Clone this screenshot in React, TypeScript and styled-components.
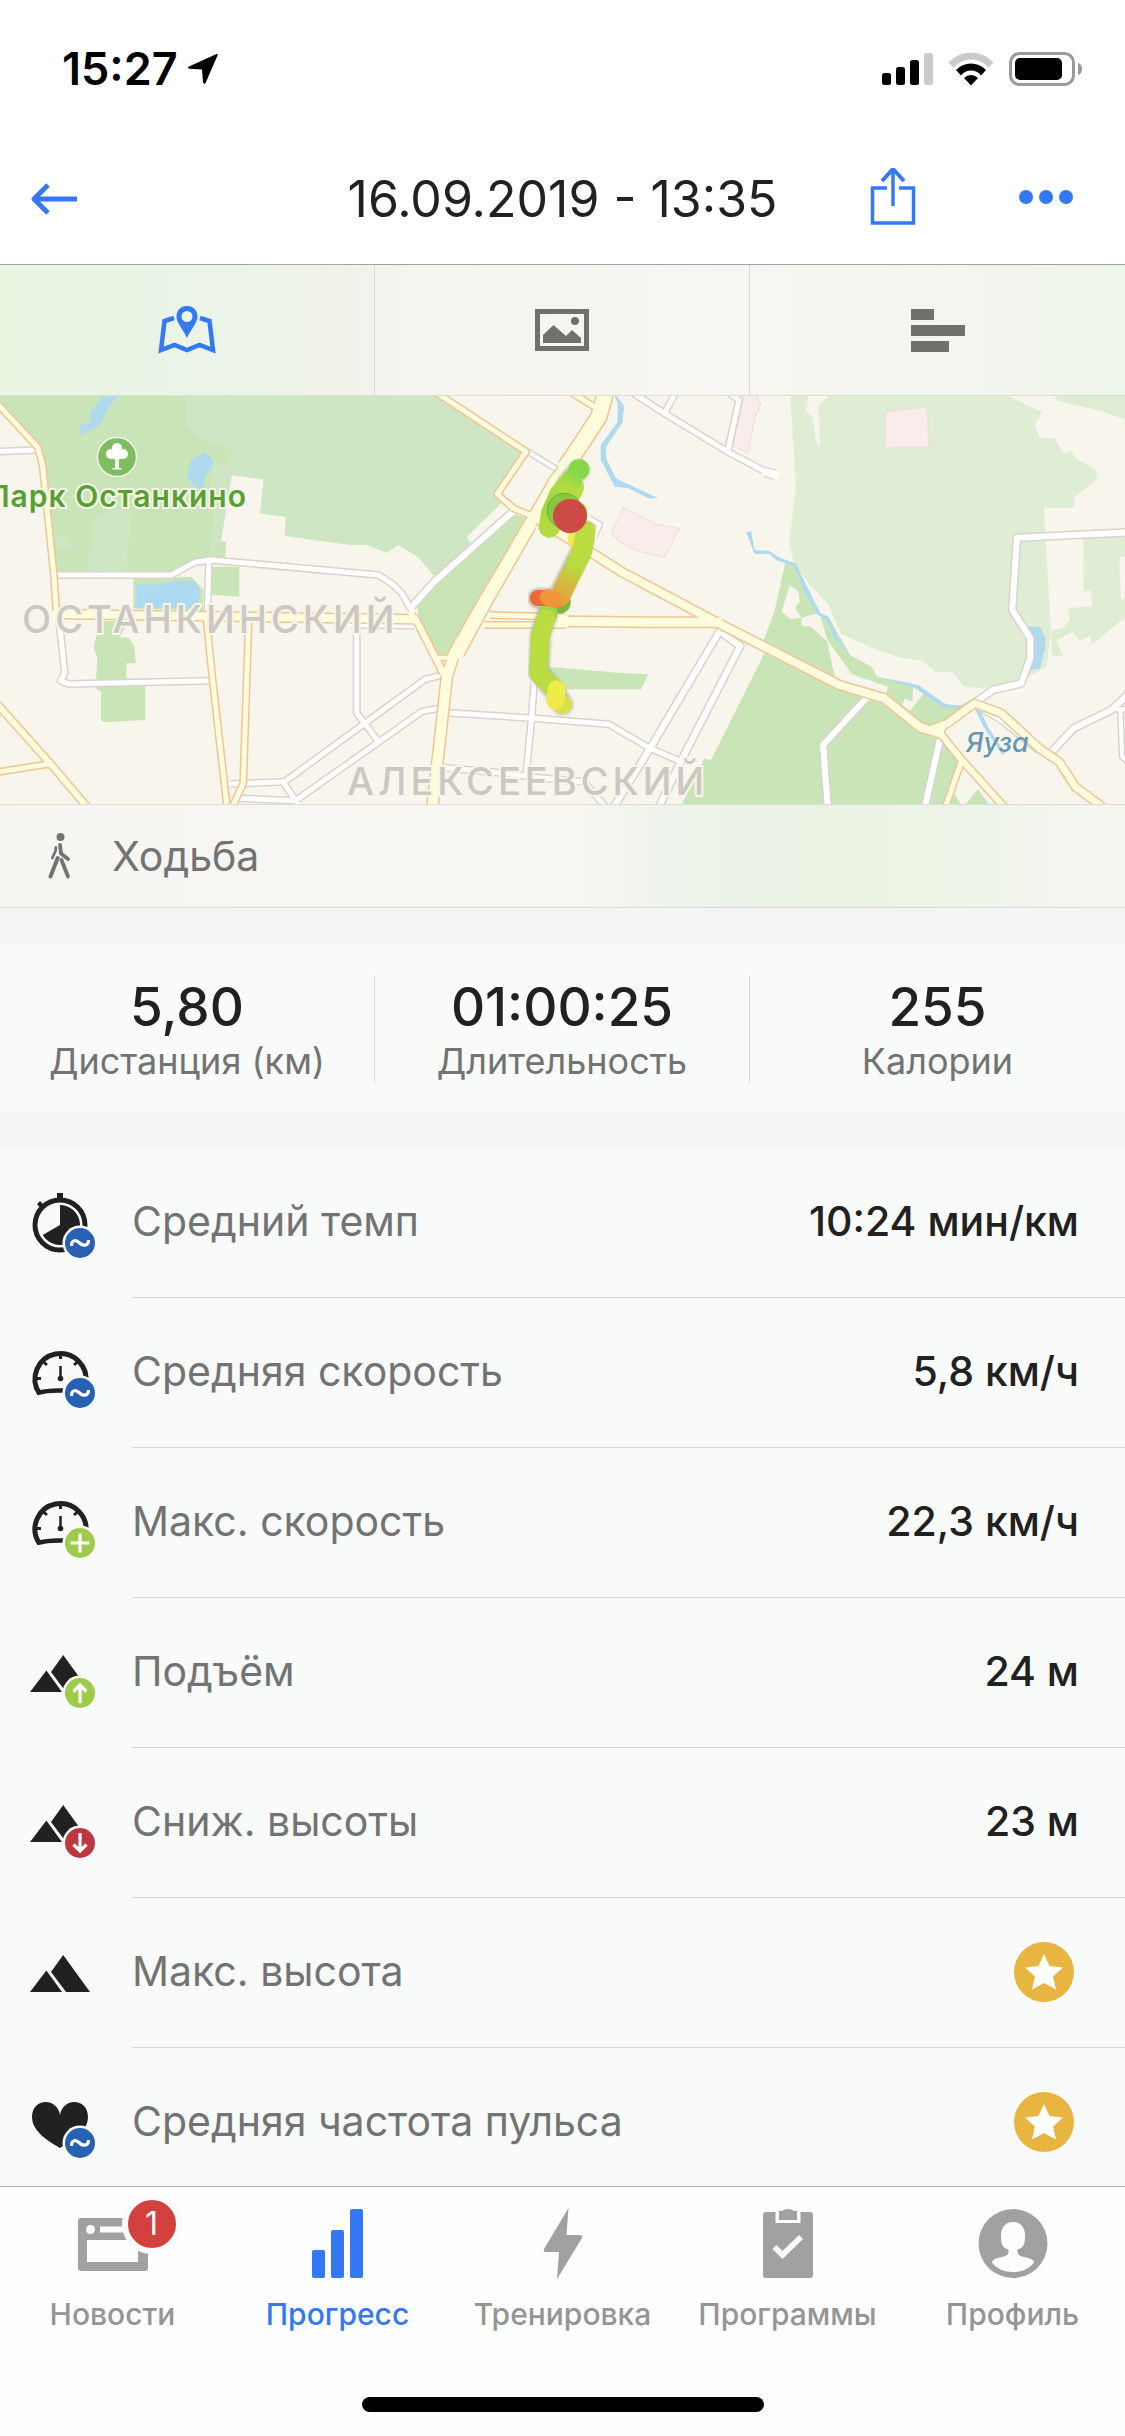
import React from 'react';
import styled, { createGlobalStyle } from 'styled-components';

const BLUE = '#3478f6';
const INK = '#212121';
const MUTED = '#737373';
const SURFACE = '#f9fbfa';
const HAIRLINE = '#d8dbd9';
const TAB_GREY = '#a1a1a1';

const GlobalStyle = createGlobalStyle`
  *, *::before, *::after { box-sizing: border-box; }
  body {
    margin: 0;
    background: #f4f4f4;
    color: ${INK};
    font-family: Inter, "Liberation Sans", sans-serif;
    -webkit-font-smoothing: antialiased;
  }
  button { font: inherit; color: inherit; background: none; border: 0; padding: 0; cursor: pointer; }
  svg { display: block; flex: none; }
  h1, p, ul, dl, dd, dt { margin: 0; padding: 0; }
`;

const Screen = styled.div`
  display: flex;
  flex-direction: column;
  height: 100vh;
`;

/* ---------- status bar ---------- */

const StatusBar = styled.div`
  display: flex;
  align-items: center;
  justify-content: space-between;
  flex: none;
  height: 132px;
  padding: 6px 42px 0 62px;
  background: #fff;
  color: #000;
`;

const Clock = styled.div`
  display: flex;
  align-items: center;
  gap: 9px;
  font-size: 45px;
  line-height: 54px;
  font-weight: 600;
`;

const StatusIcons = styled.div`
  display: flex;
  align-items: center;
  gap: 15px;
`;

/* ---------- navigation header ---------- */

const NavBar = styled.header`
  display: grid;
  grid-template-columns: 1fr auto 1fr;
  align-items: center;
  flex: none;
  height: 133px;
  border-bottom: 1px solid #a0a1a0;
  background: #fff;
`;

const NavStart = styled.div`
  display: flex;
  padding-left: 30px;
`;

const NavTitle = styled.h1`
  padding-top: 1px;
  font-size: 50px;
  line-height: 60px;
  font-weight: 400;
`;

const NavActions = styled.div`
  display: flex;
  align-items: center;
  justify-content: flex-end;
  gap: 102px;
  padding-right: 51px;
`;

const IconButton = styled.button`
  display: inline-flex;
  color: ${BLUE};
`;

/* ---------- scrolling content ---------- */

const Content = styled.main`
  flex: 1;
  min-height: 0;
  overflow-y: auto;
  scrollbar-width: none;
`;

const ViewSwitch = styled.div`
  display: grid;
  grid-template-columns: repeat(3, 1fr);
  height: 131px;
  border-bottom: 1px solid #dcddd7;
  background: linear-gradient(90deg, #e9f4e1 0%, #eaf4e7 17%, #f0f3ea 30%, #f6f4ef 38%, #f7f6f2 67%, #f3f5ee 85%, #eef5ea 100%);
`;

const ViewButton = styled.button<{ $active?: boolean }>`
  display: flex;
  align-items: center;
  justify-content: center;
  color: ${(p) => (p.$active ? BLUE : '#70716f')};
  border-right: 1px solid #d9dbd5;
  &:last-child { border-right: 0; }
`;

const MapView = styled.svg`
  width: 100%;
  height: 408px;
`;

const ActivityBar = styled.div`
  display: flex;
  align-items: center;
  gap: 40px;
  height: 104px;
  padding: 0 48px;
  border-top: 1px solid #d9dbd6;
  border-bottom: 1px solid #d9dbd4;
  background: linear-gradient(90deg, #f7f5f2 0%, #f7f6f1 52%, #f0f4ec 57%, #eaf3e7 66%, #eaf4e2 76%, #eff4e9 88%, #f5f5f0 97%);
  color: ${MUTED};
  font-size: 41px;
  line-height: 50px;
`;

const Summary = styled.dl`
  display: grid;
  grid-template-columns: repeat(3, 1fr);
  margin: 36px 0;
  padding: 31px 0 29px;
  background: ${SURFACE};
`;

const SummaryItem = styled.div`
  display: flex;
  flex-direction: column-reverse;
  align-items: center;
  height: 108px;
  border-right: 1px solid ${HAIRLINE};
  &:last-child { border-right: 0; }
`;

const SummaryValue = styled.dd`
  font-size: 53px;
  line-height: 64px;
  font-weight: 500;
`;

const SummaryLabel = styled.dt`
  font-size: 36px;
  line-height: 44px;
  color: ${MUTED};
`;

const MetricList = styled.ul`
  list-style: none;
  background: ${SURFACE};
`;

const MetricRow = styled.li`
  display: flex;
  gap: 36px;
  align-items: center;
  padding-left: 28px;
`;

const MetricBody = styled.div`
  display: flex;
  flex: 1;
  align-items: center;
  justify-content: space-between;
  height: 150px;
  padding: 0 46px 3px 0;
  border-bottom: 1px solid ${HAIRLINE};
  font-size: 41px;
  line-height: 50px;
`;

const MetricLabel = styled.span`
  color: ${MUTED};
`;

const MetricValue = styled.span`
  font-weight: 500;
`;

/* ---------- tab bar ---------- */

const TabBar = styled.nav`
  flex: none;
  border-top: 1px solid #acadac;
  background: #fefefe;
`;

const Tabs = styled.div`
  display: grid;
  grid-template-columns: repeat(5, 1fr);
  padding-top: 21px;
`;

const Tab = styled.button<{ $active?: boolean }>`
  display: flex;
  flex-direction: column;
  align-items: center;
  gap: 15px;
  color: ${(p) => (p.$active ? BLUE : TAB_GREY)};
`;

const TabIcon = styled.span`
  position: relative;
  display: block;
`;

const TabLabel = styled.span<{ $active?: boolean }>`
  color: ${(p) => (p.$active ? BLUE : '#959595')};
  font-size: 30px;
  line-height: 38px;
  font-weight: 500;
`;

const Badge = styled.span`
  position: absolute;
  top: -14px;
  right: -34px;
  display: flex;
  align-items: center;
  justify-content: center;
  width: 60px;
  height: 60px;
  border: 6px solid #fafafa;
  border-radius: 50%;
  background: #d2413e;
  color: #fff;
  font-size: 32px;
  line-height: 40px;
`;

const HomeIndicator = styled.div`
  width: 402px;
  height: 15px;
  margin: 64px auto 24px;
  border-radius: 8px;
  background: #000;
`;

/* ---------- status and header icons ---------- */

const LocationArrow = () => (
  <svg width="32" height="32" viewBox="0 0 32 32" aria-hidden="true">
    <path d="M29.500 1 2 13.500Q-.5 15 2.500 15.800L15 16.500 16 29Q17 32.500 18.800 29.500L30.500 2.500Q31 .5 29.500 1Z" fill="#000" />
  </svg>
);

const SignalIcon = () => (
  <svg width="51" height="34" viewBox="0 0 51 34" aria-hidden="true">
    <rect x="0" y="21" width="9" height="12" rx="2.500" />
    <rect x="14" y="15" width="9" height="18" rx="2.500" />
    <rect x="28" y="8" width="9" height="25" rx="2.500" />
    <rect x="42" y="1" width="9" height="32" rx="2.500" fill="#cbcbcb" />
  </svg>
);

const WifiIcon = () => (
  <svg width="46" height="34" viewBox="0 0 46 34" aria-hidden="true">
    <path d="M.5 10.500Q10 .5 23 .5T45.500 10.500L40.500 15.500Q33 7.500 23 7.500T5.500 15.500Z" fill="#cbcbcb" />
    <path d="M8 18Q14 11.500 23 11.500T38 18L33 23.500Q29 18.500 23 18.500T13 23.500Z" />
    <path d="M16 26Q19 23 23 23T30 26L23 33.500Z" />
  </svg>
);

const BatteryIcon = () => (
  <svg width="74" height="34" viewBox="0 0 74 34" aria-hidden="true">
    <rect x="1.500" y="1.500" width="63" height="31" rx="9" fill="none" stroke="#9a9a9a" strokeWidth="3" />
    <rect x="6" y="6" width="47" height="22" rx="5" />
    <path d="M69 11Q73 12 73 17T69 23Z" fill="#9a9a9a" />
  </svg>
);

const BackIcon = () => (
  <svg width="50" height="34" viewBox="0 0 50 34" fill="none" stroke="currentColor" strokeWidth="5" aria-hidden="true">
    <path d="M47 18H5" />
    <path d="M18 4 4 18 18 32" strokeLinejoin="round" />
  </svg>
);

const ShareIcon = () => (
  <svg width="46" height="60" viewBox="0 0 46 60" fill="none" stroke="currentColor" strokeWidth="3.500" aria-hidden="true">
    <path d="M17 20H2.500V55H43.500V20H29" />
    <path d="M23 38V2" />
    <path d="M12 13 23 1 34 13" strokeWidth="4" />
  </svg>
);

const MoreIcon = () => (
  <svg width="56" height="16" viewBox="0 0 56 16" fill="currentColor" aria-hidden="true">
    <circle cx="8" cy="7" r="7" />
    <circle cx="28" cy="7" r="7" />
    <circle cx="48" cy="7" r="7" />
  </svg>
);

const MapIcon = () => (
  <svg width="58" height="50" viewBox="0 0 58 50" fill="none" stroke="currentColor" strokeWidth="4.500" aria-hidden="true">
    <path d="M16 13 6.500 16 3 45 16.500 40 29 45 41.500 40 55 45 51.500 16 42 13" />
    <path
      d="M29 1C22.500 1 18.500 5.500 18.500 11.500 18.500 18 25 24 29 33 33 24 39.500 18 39.500 11.500 39.500 5.500 35.500 1 29 1ZM29 6A5.500 5.500 0 1 1 29 17A5.500 5.500 0 1 1 29 6Z"
      fill="currentColor"
      fillRule="evenodd"
      stroke="none"
    />
  </svg>
);

const PhotoIcon = () => (
  <svg width="54" height="44" viewBox="0 0 54 44" fill="currentColor" aria-hidden="true">
    <path d="M0 1H54V43H0ZM5 6V38H49V6Z" fillRule="evenodd" />
    <circle cx="40" cy="13" r="4" />
    <path d="M8 35V27L18.500 17 31 28 37 22 46 30V35Z" />
  </svg>
);

const SplitsIcon = () => (
  <svg width="54" height="44" viewBox="0 0 54 44" fill="currentColor" aria-hidden="true">
    <rect y="1" width="23" height="11" />
    <rect y="17" width="54" height="11" />
    <rect y="33" width="38" height="11" />
  </svg>
);

const WalkIcon = () => (
  <svg width="24" height="46" viewBox="0 0 24 46" fill="none" stroke="currentColor" strokeLinecap="round" strokeLinejoin="round" aria-hidden="true">
    <circle cx="12.500" cy="4" r="4" fill="currentColor" stroke="none" />
    <path d="M12 12 13 20.500 20 26" strokeWidth="3.800" />
    <path d="M7.800 14.500 7.500 18 4.300 25" strokeWidth="2.800" />
    <path d="M9.700 25 2.500 43.500" strokeWidth="4" />
    <path d="M13.500 27 20 43.500" strokeWidth="3.800" />
  </svg>
);

/* ---------- metric icons ---------- */

type Mark = 'avg' | 'plus' | 'up' | 'down';

const MARK_COLORS: Record<Mark, string> = {
  avg: '#2860b4',
  plus: '#9fcb4b',
  up: '#9fcb4b',
  down: '#c03640',
};

const MARK_PATHS: Record<Mark, string> = {
  avg: 'M43.500 58C43.500 51 48.500 52 51.500 55S60.500 58.500 60.500 52',
  plus: 'M52 45.500V64.500M42.500 55H61.500',
  up: 'M52 65V47M45.500 53.500 52 47 58.500 53.500',
  down: 'M52 45V63M45.500 56.500 52 63 58.500 56.500',
};

const GLYPHS = {
  stopwatch: (
    <>
      <circle cx="32" cy="37" r="25" fill="none" stroke={INK} strokeWidth="5" />
      <path d="M29 5H35V12H29ZM9 16 12 13 17 18 13 21Z" />
      <path d="M32 37V17A20 20 0 1 1 14.700 47Z" />
    </>
  ),
  gauge: (
    <>
      <path d="M11.500 55.500A25.500 25.500 0 1 1 57.500 46" fill="none" stroke={INK} strokeWidth="5" />
      <path d="M9 55Q20 52 35 52.500" fill="none" stroke={INK} strokeWidth="4.500" />
      <path d="M32.500 15V21M6 40.500H13M14.500 23 19 27M50.500 23 46 27" stroke={INK} strokeWidth="3" />
      <path d="M32.500 28V41" stroke={INK} strokeWidth="2.500" />
      <circle cx="32.500" cy="40.500" r="2.800" />
    </>
  ),
  mountains: <path d="M2 54 18.400 32.500 34 54ZM35.200 17 62 54H38L23 34Z" />,
  heart: <path d="M32 60C22 54 4 44 4 29 4 10 29 9 32 27 35 9 60 10 60 29 60 44 42 54 32 60Z" />,
};

interface MetricIconProps {
  glyph: keyof typeof GLYPHS;
  mark?: Mark;
}

const MetricIcon = ({ glyph, mark }: MetricIconProps) => (
  <svg width="68" height="70" viewBox="0 0 68 70" fill={INK} overflow="visible" aria-hidden="true">
    {GLYPHS[glyph]}
    {mark && (
      <>
        <circle cx="52" cy="55" r="17.500" fill={SURFACE} />
        <circle cx="52" cy="55" r="15" fill={MARK_COLORS[mark]} />
        <path d={MARK_PATHS[mark]} fill="none" stroke="#fff" strokeWidth="3.200" />
      </>
    )}
  </svg>
);

const PremiumStar = () => (
  <svg width="66" height="66" viewBox="0 0 66 66" role="img" aria-label="Premium">
    <circle cx="31" cy="34" r="30" fill="#e9b541" />
    <path d="M31 16 36.500 28 50 29.500 40 38.500 43 51.500 31 45 19 51.500 22 38.500 12 29.500 25.500 28Z" fill="#fff" />
  </svg>
);

/* ---------- tab bar icons ---------- */

const NewsIcon = () => (
  <svg width="70" height="72" viewBox="0 0 70 72" fill="currentColor" aria-hidden="true">
    <path
      d="M3 10H67Q70 10 70 13V60Q70 63 67 63H3Q0 63 0 60V13Q0 10 3 10ZM9 32V54H60V32ZM22 18.500V24.500H62V18.500ZM12.500 17A4.500 4.500 0 1 0 12.500 26A4.500 4.500 0 1 0 12.500 17Z"
      fillRule="evenodd"
    />
  </svg>
);

const ProgressIcon = () => (
  <svg width="52" height="72" viewBox="0 0 52 72" fill="currentColor" aria-hidden="true">
    <rect y="42" width="13" height="28" rx="2" />
    <rect x="19" y="22" width="13" height="48" rx="2" />
    <rect x="38" y="1" width="13" height="69" rx="2" />
  </svg>
);

const BoltIcon = () => (
  <svg width="40" height="72" viewBox="0 0 40 72" fill="currentColor" aria-hidden="true">
    <path d="M25.500 0 23.500 27H37Q40 27 39 30L14 71 16 44H2.500Q0 43.500 1 41Z" />
  </svg>
);

const PlansIcon = () => (
  <svg width="50" height="72" viewBox="0 0 50 72" fill="currentColor" aria-hidden="true">
    <path
      d="M3 4H12.500V15H37.500V4H47Q50 4 50 7V67Q50 70 47 70H3Q0 70 0 67V7Q0 4 3 4ZM9.500 41 19.500 51 40 31 36 27 19.500 43 13.500 37Z"
      fillRule="evenodd"
    />
    <path d="M16 12V3H19Q21 1 25 1T31 3H34V12Z" />
  </svg>
);

const ProfileIcon = () => (
  <svg width="70" height="72" viewBox="0 0 70 72" aria-hidden="true">
    <circle cx="35" cy="35.500" r="34.500" fill="currentColor" />
    <path
      d="M35 14C27 14 23 20 23 28 23 35 24 40 30.500 41.500 31 46 29 48 24 49 18 50 14 52 14 54.500 19 61 26 64 35 64S51 61 56 54.500C56 52 52 50 46 49 41 48 39 46 39.500 41.500 46 40 47 35 47 28 47 20 43 14 35 14Z"
      fill="#fefefe"
    />
  </svg>
);

/* ---------- map ---------- */

const WEST = 'translate(0 390) scale(.36036 .33333)';
const EAST = 'translate(560 390) scale(.36036 .33333)';
const TRACK = 'translate(480 430) scale(.33333)';

const PARK = '#c9e5b8';
const FOREST = '#cfe6c4';
const GARDEN = '#dfedd5';
const WATER = '#afd9ee';
const LAND = '#f8f5ec';

type Area = [color: string, points: string];
type Road = [width: number, points: string];

const westAreas: Area[] = [
  [PARK, '0,0 1200,0 1460,185 1380,315 1395,335 1295,440 1305,460 1250,515 1205,557 1160,500 1105,465 1073,488 1020,465 975,465 790,437 793,380 722,370 732,268 643,255 613,453 628,455 625,505 580,505 540,515 475,550 155,550 125,215 110,175 0,50'],
  [FOREST, '515,0 1200,0 1460,185 1380,315 1395,335 1295,440 1305,460 1205,557 1160,500 1105,465 1073,488 1020,465 975,465 790,437 793,380 722,370 732,268 643,255 613,453 580,500 597,385 580,300 595,215 620,232 643,200 640,175 560,148 515,100'],
  [FOREST, '270,380 320,358 365,360 350,543 250,543 240,485 262,460 250,410'],
  [FOREST, '155,440 188,438 198,480 160,475'],
  [PARK, '1205,575 1420,370 1475,390 1380,540 1310,660 1255,765 1245,800 1212,795 1160,680 1158,630'],
  [PARK, '370,568 530,560 565,600 563,663 370,655'],
  [WATER, '300,0 340,0 300,55 278,103 225,137 220,108 252,95 250,68'],
  [WATER, '568,185 592,210 587,232 570,258 565,295 545,295 517,258 530,210'],
  [WATER, '378,583 440,583 490,572 540,572 556,605 548,655 378,655'],
  [PARK, '587,530 664,530 664,620 587,615'],
  [PARK, '285,693 355,695 332,742 357,743 372,768 377,820 351,820 351,870 403,888 403,990 290,997 280,990 280,905 265,895 270,805 260,772 268,735'],
];

const eastAreas: Area[] = [
  [GARDEN, '638,0 1210,0 1338,67 1318,103 1330,143 1373,145 1398,192 1418,182 1430,205 1488,240 1490,268 1430,320 1425,353 1343,353 1348,450 1362,720 1350,830 1270,880 1175,895 1122,890 1088,847 1040,845 1008,813 950,805 880,780 780,732 742,640 690,580 650,525 636,455 655,285'],
  [LAND, '690,0 755,0 745,18 718,45 722,175 710,150 700,80 683,65'],
  [GARDEN, '1360,0 1570,0 1570,90 1510,65 1380,32'],
  [GARDEN, '1452,443 1570,435 1570,500 1552,500 1557,630 1570,625 1570,680 1475,765 1470,738 1442,753 1422,727 1378,750 1395,797 1365,797 1362,720 1395,715 1415,690 1410,655 1477,648 1472,600 1453,605'],
  [PARK, '565,750 595,665 625,518 655,530 722,668 670,683 665,675 652,655 665,635 662,605 638,585 615,665 640,687 670,683 670,708 697,710 742,755 762,860 775,890'],
  [PARK, '335,1250 400,1105 418,1112 567,790 775,890 905,925 1000,1020 1055,1035 1110,1110 1060,1250'],
  [PARK, '720,668 750,690 805,795 865,830 880,860 975,880 1060,945 1150,945 1065,1000 1020,1015 905,912 910,890 810,853 742,750'],
  [LAND, '980,890 1008,912 972,962 948,945 957,927 978,935'],
  [PARK, '-34,830 160,848 245,853 225,898 -34,898'],
  [PARK, '1120,1250 1160,1197 1195,1250'],
  [PARK, '1070,1250 1095,1210 1115,1250'],
  [WATER, '145,0 178,48 173,98 128,170 128,205 155,265 180,278 273,325 245,325 190,295 152,290 113,210 113,165 160,95 160,40'],
  [WATER, '517,428 530,422 540,480 580,483 610,503 655,522 690,600 722,668 745,680 770,740 805,795 760,745 740,690 715,675 680,610 650,528 600,510 580,492 540,492'],
  [WATER, '890,863 970,880 995,885 1065,940 1105,950 1150,925 1155,945 1110,958 1060,950 985,893'],
  [WATER, '1150,955 1165,960 1190,1015 1235,1090 1228,1095 1175,1010'],
  [WATER, '1300,710 1332,710 1347,745 1345,780 1332,835 1305,840'],
];

const eastBlocks = [
  '903,67 1015,50 1020,57 1023,170 945,170 903,176',
  '175,352 265,402 330,415 290,503 208,480 170,458 142,430',
  '515,0 545,18 557,42 542,78 522,188 480,168 505,40',
];

const westStreets: Road[] = [
  [5, '-10,185 100,180'],
  [5, '155,555 475,555 540,517 585,510 1050,555 1090,583 1115,610 1142,660'],
  [6, '1142,650 1205,575 1420,368'],
  [5, '580,510 575,670'],
  [5, '165,700 180,850 168,872 190,882 585,872'],
  [4, '975,706 1150,708'],
  [5, '990,700 990,968 1050,1055'],
  [5, '1220,857 1180,868 790,1175 640,1182'],
  [5, '1215,955 1170,965 820,1232 665,1225'],
  [5, '785,1175 825,1240'],
  [5, '1240,968 1480,985 1690,1003 1804,1075 1889,1115'],
  [5, '1482,880 1475,985 1460,1150'],
  [5, '1235,1133 1400,1150 1480,1162 1620,1175 1680,1250'],
  [4, '1465,185 1545,238'],
];

const eastStreets: Road[] = [
  [5, '190,0 290,70 465,185 570,245'],
  [8, '570,246 596,254'],
  [5, '290,70 325,0'],
  [5, '465,185 497,30 470,10'],
  [4, '80,385 110,403 95,440'],
  [6, '445,720 250,1075 150,1250'],
  [6, '445,725 500,768 335,1115 275,1250'],
  [6, '850,925 730,1065 743,1250'],
  [6, '1055,1045 1013,1250'],
  [6, '1150,940 1200,900 1280,880 1305,805 1305,745 1255,660 1268,443 1580,427'],
  [6, '1160,948 1220,985 1330,1080'],
  [6, '1365,1085 1425,1015 1530,960 1580,910'],
  [4, '1535,958 1580,958'],
  [4, '1555,960 1560,1100 1580,1120'],
];

const westAvenues: Road[] = [
  [5, '-10,38 105,172 118,225 150,560 157,680'],
  [8, '155,672 1150,688'],
  [6, '1142,675 1160,700 1230,850'],
  [5, '573,690 590,870 630,1250'],
  [5, '690,695 675,1180 645,1250'],
  [6, '-10,940 135,1115 245,1255'],
  [5, '-10,1147 135,1122'],
  [5, '1200,0 1460,185 1380,312 1425,355 1480,380'],
  [4, '1212,803 1250,803'],
  [5, '1360,675 1570,680'],
  [5, '1345,705 1570,705'],
  [10, '1682,15 1655,90 1600,190 1540,270 1450,440 1350,620 1260,790 1240,860 1230,960 1200,1250'],
  [15, '1682,0 1662,80 1620,150 1570,230'],
  [12, '1470,405 1350,630 1270,790'],
];

const eastAvenues: Road[] = [
  [5, '20,0 95,50'],
  [9, '0,694 250,697 440,697'],
  [8, '-75,380 0,430 90,490 170,545 440,700 775,885 900,925 1000,1012 1055,1030'],
  [6, '1055,1030 1115,1110 1240,1260'],
  [7, '1030,1018 1075,1000 1150,940 1225,970 1330,1075 1385,1115 1430,1190 1510,1255'],
  [5, '1115,1110 1070,1250'],
  [4, '1055,1030 1072,1000'],
];

const Areas = ({ items }: { items: Area[] }) => (
  <>
    {items.map(([color, points]) => (
      <polygon key={color + points} points={points} fill={color} />
    ))}
  </>
);

interface RoadsProps {
  west: Road[];
  east: Road[];
  casing: string;
  fill: string;
}

const Roads = ({ west, east, casing, fill }: RoadsProps) => (
  <g fill="none" strokeLinejoin="round">
    {[casing, fill].map((color, layer) => (
      <g key={color} stroke={color}>
        {[west, east].map((roads, side) => (
          <g key={side} transform={side === 0 ? WEST : EAST}>
            {roads.map(([width, points]) => (
              <polyline
                key={points}
                points={points}
                strokeWidth={layer === 0 ? width + 3 : width}
                strokeLinecap={layer === 0 ? 'butt' : 'round'}
                vectorEffect="non-scaling-stroke"
              />
            ))}
          </g>
        ))}
      </g>
    ))}
  </g>
);

const RouteMap = () => (
  <MapView viewBox="0 396 1125 408" preserveAspectRatio="xMidYMid slice" role="img" aria-label="Карта маршрута">
    <defs>
      <filter id="soft" x="-20%" y="-20%" width="140%" height="140%">
        <feGaussianBlur stdDeviation="5" />
      </filter>
      <linearGradient id="climb" gradientUnits="userSpaceOnUse" x1="280" y1="400" x2="220" y2="520">
        <stop offset="0" stopColor="#b9dc41" />
        <stop offset="1" stopColor="#f0953a" />
      </linearGradient>
      <linearGradient id="north" gradientUnits="userSpaceOnUse" x1="290" y1="130" x2="210" y2="290">
        <stop offset="0" stopColor="#86d849" />
        <stop offset=".3" stopColor="#b5dc41" />
        <stop offset=".65" stopColor="#93d746" />
        <stop offset="1" stopColor="#b3db40" />
      </linearGradient>
    </defs>
    <rect y="390" width="1125" height="420" fill={LAND} />
    <g transform={WEST}>
      <Areas items={westAreas} />
    </g>
    <g transform={EAST}>
      <Areas items={eastAreas} />
      {eastBlocks.map((points) => (
        <polygon key={points} points={points} fill="#f9edeb" stroke="#f2dcd8" strokeWidth="3" />
      ))}
    </g>
    <Roads west={westStreets} east={eastStreets} casing="#d9d3cb" fill="#ffffff" />
    <Roads west={westAvenues} east={eastAvenues} casing="#f0c594" fill="#fdfcdc" />

    <circle cx="117" cy="457" r="19.500" fill="#80bd60" stroke="#f0f7ea" strokeWidth="1.500" />
    <g fill="#fff">
      <circle cx="117" cy="448" r="5" />
      <circle cx="111" cy="454" r="5" />
      <circle cx="123" cy="454" r="5" />
      <circle cx="117" cy="454" r="6" />
      <path d="M115.500 456H118.500L119 468H121.500V469.500H112.500V468H115Z" />
    </g>

    <g stroke={LAND} strokeWidth="4" paintOrder="stroke" strokeLinejoin="round" fontWeight="500">
      <text x="247" y="507" textAnchor="end" fontSize="30" fontWeight="600" letterSpacing="1" fill="#56a132">Парк Останкино</text>
      <text x="22" y="633" fontSize="38" letterSpacing="4" fill="#cbc8c1">ОСТАНКИНСКИЙ</text>
      <text x="347" y="795" fontSize="38" letterSpacing="4" fill="#cbc8c1">АЛЕКСЕЕВСКИЙ</text>
      <text x="966" y="752" fontSize="27" fontStyle="italic" stroke="none" fill="#6798b4">Яуза</text>
    </g>

    <g transform={TRACK} fill="none" strokeLinecap="round" strokeLinejoin="round">
      <g stroke="#8d8b86" strokeWidth="62" opacity=".55" filter="url(#soft)">
        <path d="M296 120 262 160 210 288M316 308 300 370 230 508 174 505M205 545 182 610 176 728 222 780 248 824" />
      </g>
      <path d="M295 118H299" stroke="#86d849" strokeWidth="60" />
      <path d="M282 172 250 240" stroke="#b5dc41" strokeWidth="60" />
      <path d="M272 153 238 195 214 250 208 292" stroke="url(#north)" strokeWidth="62" />
      <path d="M292 245 285 262" stroke="#b9dc41" strokeWidth="60" />
      <path d="M292 328V330" stroke="#f4e94a" strokeWidth="56" />
      <path d="M240 515V518" stroke="#78b83c" strokeWidth="64" />
      <path d="M317 302 306 365 240 500" stroke="url(#climb)" strokeWidth="60" />
      <path d="M205 545V552" stroke="#98d946" strokeWidth="54" />
      <path d="M198 565 180 620 176 730 222 778" stroke="#b9dc41" strokeWidth="56" />
      <path d="M174 504H200" stroke="#ea6934" strokeWidth="48" />
      <path d="M204 502 222 510" stroke="#f0953a" strokeWidth="50" />
      <path d="M249 824V825" stroke="#d5e346" strokeWidth="54" />
      <path d="M230 778 226 812" stroke="#f0ea4a" strokeWidth="54" />
      <circle cx="254" cy="242" r="52" fill="#7fc042" fillOpacity=".75" stroke="#5f9a35" strokeWidth="2" />
      <circle cx="270" cy="258" r="51" fill="#cc4b46" />
    </g>
  </MapView>
);

/* ---------- data ---------- */

const summary = [
  { label: 'Дистанция (км)', value: '5,80' },
  { label: 'Длительность', value: '01:00:25' },
  { label: 'Калории', value: '255' },
];

interface Metric extends MetricIconProps {
  label: string;
  value?: string;
}

const metrics: Metric[] = [
  { label: 'Средний темп', value: '10:24 мин/км', glyph: 'stopwatch', mark: 'avg' },
  { label: 'Средняя скорость', value: '5,8 км/ч', glyph: 'gauge', mark: 'avg' },
  { label: 'Макс. скорость', value: '22,3 км/ч', glyph: 'gauge', mark: 'plus' },
  { label: 'Подъём', value: '24 м', glyph: 'mountains', mark: 'up' },
  { label: 'Сниж. высоты', value: '23 м', glyph: 'mountains', mark: 'down' },
  { label: 'Макс. высота', glyph: 'mountains' },
  { label: 'Средняя частота пульса', glyph: 'heart', mark: 'avg' },
];

const tabs = [
  { label: 'Новости', Icon: NewsIcon, badge: 1 },
  { label: 'Прогресс', Icon: ProgressIcon, active: true },
  { label: 'Тренировка', Icon: BoltIcon },
  { label: 'Программы', Icon: PlansIcon },
  { label: 'Профиль', Icon: ProfileIcon },
];

export default function App() {
  return (
    <Screen>
      <GlobalStyle />
      <StatusBar>
        <Clock>
          15:27
          <LocationArrow />
        </Clock>
        <StatusIcons>
          <SignalIcon />
          <WifiIcon />
          <BatteryIcon />
        </StatusIcons>
      </StatusBar>

      <NavBar>
        <NavStart>
          <IconButton aria-label="Назад">
            <BackIcon />
          </IconButton>
        </NavStart>
        <NavTitle>16.09.2019 - 13:35</NavTitle>
        <NavActions>
          <IconButton aria-label="Поделиться">
            <ShareIcon />
          </IconButton>
          <IconButton aria-label="Ещё">
            <MoreIcon />
          </IconButton>
        </NavActions>
      </NavBar>

      <Content>
        <ViewSwitch>
          <ViewButton $active aria-label="Карта">
            <MapIcon />
          </ViewButton>
          <ViewButton aria-label="Фото">
            <PhotoIcon />
          </ViewButton>
          <ViewButton aria-label="Отрезки">
            <SplitsIcon />
          </ViewButton>
        </ViewSwitch>
        <RouteMap />
        <ActivityBar>
          <WalkIcon />
          Ходьба
        </ActivityBar>

        <Summary>
          {summary.map((item) => (
            <SummaryItem key={item.label}>
              <SummaryLabel>{item.label}</SummaryLabel>
              <SummaryValue>{item.value}</SummaryValue>
            </SummaryItem>
          ))}
        </Summary>

        <MetricList>
          {metrics.map(({ label, value, glyph, mark }) => (
            <MetricRow key={label}>
              <MetricIcon glyph={glyph} mark={mark} />
              <MetricBody>
                <MetricLabel>{label}</MetricLabel>
                {value ? <MetricValue>{value}</MetricValue> : <PremiumStar />}
              </MetricBody>
            </MetricRow>
          ))}
        </MetricList>
      </Content>

      <TabBar>
        <Tabs>
          {tabs.map(({ label, Icon, badge, active }) => (
            <Tab key={label} $active={active} aria-current={active ? 'page' : undefined}>
              <TabIcon>
                <Icon />
                {badge && <Badge>{badge}</Badge>}
              </TabIcon>
              <TabLabel $active={active}>{label}</TabLabel>
            </Tab>
          ))}
        </Tabs>
        <HomeIndicator />
      </TabBar>
    </Screen>
  );
}
